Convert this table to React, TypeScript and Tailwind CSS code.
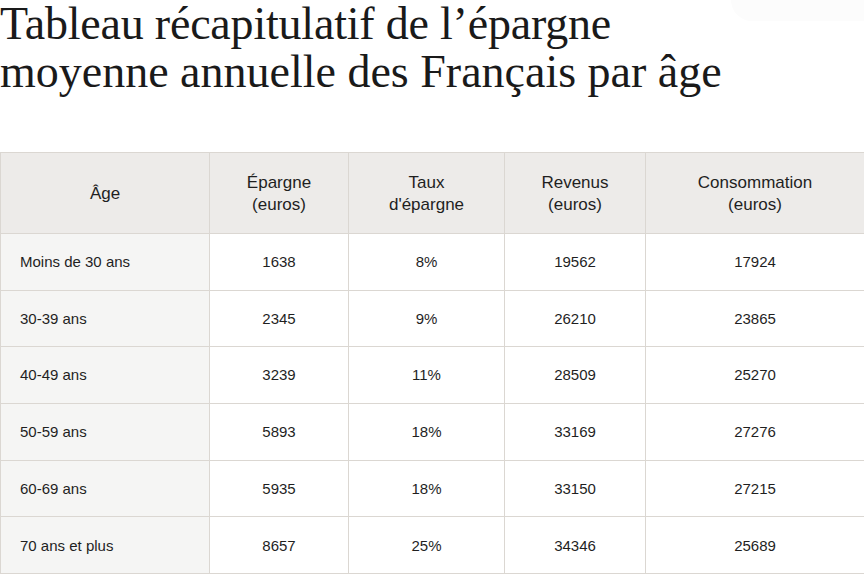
import React from "react";

const rows = [
  ["Moins de 30 ans", "1638", "8%", "19562", "17924"],
  ["30-39 ans", "2345", "9%", "26210", "23865"],
  ["40-49 ans", "3239", "11%", "28509", "25270"],
  ["50-59 ans", "5893", "18%", "33169", "27276"],
  ["60-69 ans", "5935", "18%", "33150", "27215"],
  ["70 ans et plus", "8657", "25%", "34346", "25689"],
];

const App = () => {
  return (
    <div className="relative min-h-[577px] w-[864px] bg-white text-[#1c1c1c]">
      <div className="absolute right-0 top-0 h-[21px] w-[133px] rounded-bl-[22px] bg-[#fcfcfc]" />
      <h1
        className="relative text-[46px] leading-[48px] tracking-[-0.2px] text-[#1a1a1a]"
        style={{ fontFamily: '"Liberation Serif", "DejaVu Serif", serif' }}
      >
        Tableau récapitulatif de l’épargne
        <br />
        <span className="tracking-[0px]">moyenne annuelle des Français par âge</span>
      </h1>
      <table
        className="mt-[56px] w-[864px] table-fixed border-collapse text-[15px] text-[#1f1f1f]"
        style={{ fontFamily: '"Liberation Sans", Arial, sans-serif' }}
      >
        <colgroup>
          <col className="w-[209px]" />
          <col className="w-[139px]" />
          <col className="w-[156px]" />
          <col className="w-[141px]" />
          <col className="w-[219px]" />
        </colgroup>
        <thead>
          <tr className="h-[81px] bg-[#edebe9] text-[17px] leading-[22px]">
            <th className="border border-[#dbd7d2] pt-[1px] font-normal">Âge</th>
            <th className="border border-[#dbd7d2] pt-[1px] font-normal">
              Épargne
              <br />
              (euros)
            </th>
            <th className="border border-[#dbd7d2] pt-[1px] font-normal">
              Taux
              <br />
              d'épargne
            </th>
            <th className="border border-[#dbd7d2] pt-[1px] font-normal">
              Revenus
              <br />
              (euros)
            </th>
            <th className="border border-[#dbd7d2] pt-[1px] font-normal">
              Consommation
              <br />
              (euros)
            </th>
          </tr>
        </thead>
        <tbody>
          {rows.map((r) => (
            <tr key={r[0]} className="h-[56.7px]">
              <td className="border border-[#dbd7d2] bg-[#f5f5f4] pl-[19px] pt-[1px]">
                {r[0]}
              </td>
              {r.slice(1).map((v, i) => (
                <td
                  key={i}
                  className="border border-[#dbd7d2] pt-[1px] text-center"
                >
                  {v}
                </td>
              ))}
            </tr>
          ))}
        </tbody>
      </table>
    </div>
  );
};

export default App;
